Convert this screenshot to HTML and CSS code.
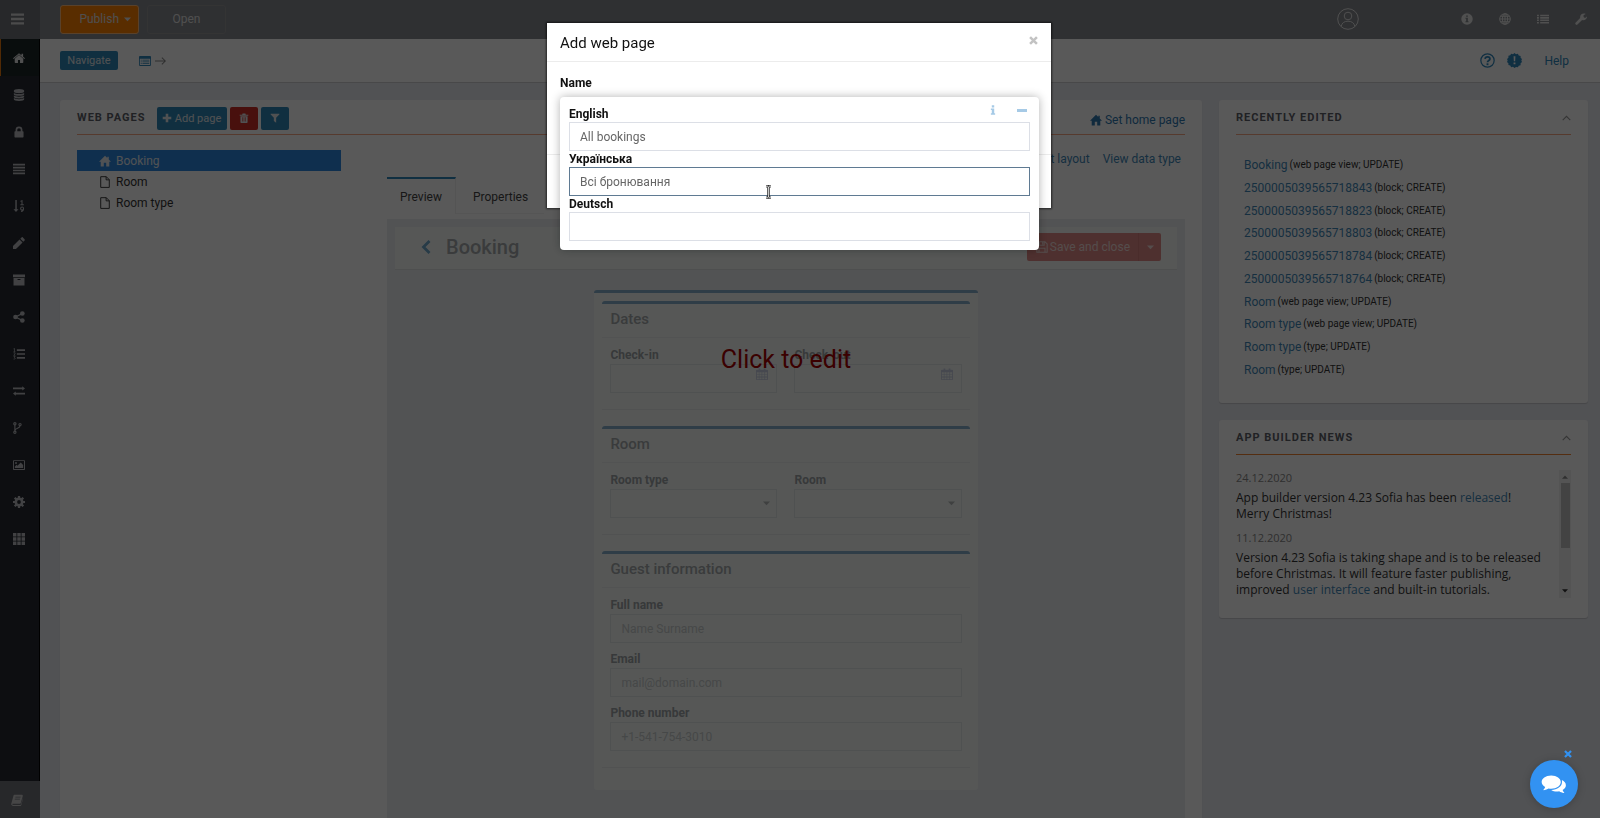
FILE: index.html
```html
<!DOCTYPE html>
<html lang="en">
<head>
  <meta charset="UTF-8" />
  <meta name="viewport" content="width=device-width, initial-scale=1" />
  <title>App builder - Web pages</title>
  <link rel="stylesheet" href="styles.css">
</head>
<body>
  <!-- icon sprite -->
  <svg class="sprite" aria-hidden="true">
    <symbol id="i-bars" viewBox="0 0 14 14"><path d="M0 1h14v2.6H0zM0 5.7h14v2.6H0zM0 10.4h14V13H0z"/></symbol>
    <symbol id="i-home" viewBox="0 0 14 14"><path d="M7 3.6 2 7.8V12c0 .5.3.8.8.8h3V9.4h2.4v3.4h3c.5 0 .8-.3.8-.8V7.8zM7 1.4 0 7.2l.8.9L7 3l6.200 5.100.8-.9-2.200-1.800V2h-1.900v1.800z"/></symbol>
    <symbol id="i-house" viewBox="0 0 14 14"><path d="M7 .8 0 7.800h2V13.500h3.600V9h2.800v4.500H12V7.800h2l-2.600-2.600V2H9.700v1.500z"/></symbol>
    <symbol id="i-db" viewBox="0 0 14 14"><path d="M7 0c3.600 0 6 .9 6 2v1c0 1.100-2.400 2-6 2S1 4.100 1 3V2c0-1.100 2.400-2 6-2zM1 4.600C2.200 5.500 4.500 5.900 7 5.900s4.800-.4 6-1.300V6c0 1.100-2.400 2-6 2S1 7.100 1 6zM1 7.600c1.200.9 3.500 1.300 6 1.300s4.800-.4 6-1.300V9c0 1.100-2.400 2-6 2S1 10.100 1 9zM1 10.600c1.200.9 3.500 1.300 6 1.300s4.800-.4 6-1.300V12c0 1.100-2.400 2-6 2s-6-.9-6-2z"/></symbol>
    <symbol id="i-lock" viewBox="0 0 14 14"><path fill-rule="evenodd" d="M3 6V4.500a4 4 0 0 1 8 0V6h.5c.5 0 .8.300.8.800v5.700c0 .5-.3.800-.8.800h-9c-.5 0-.8-.3-.8-.8V6.800c0-.5.3-.8.8-.8zm2 0h4V4.500a2 2 0 0 0-4 0z"/></symbol>
    <symbol id="i-align" viewBox="0 0 14 14"><path d="M0 1h14v1.900H0zM0 4.400h14v1.900H0zM0 7.800h14v1.900H0zM0 11.200h14v1.900H0z"/></symbol>
    <symbol id="i-sort" viewBox="0 0 14 14"><path d="M2.700 0h1.700v10.700h2L3.500 14 .6 10.700h2.100z"/><path fill="none" stroke="currentColor" stroke-width="1.200" d="M8.700 1.600 10.500.8V5.500M8.600 5.600h4M12.300 10a1.700 1.700 0 1 1-3.400-.1 1.700 1.700 0 0 1 3.400.1c0 1.800-.7 3.300-2.900 3.300"/></symbol>
    <symbol id="i-pencil" viewBox="0 0 14 14"><path d="M0 14v-3.500L7.600 2.900l3.500 3.500L3.500 14zM8.500 2 10 .5c.5-.5 1-.5 1.500 0l2 2c.5.500.5 1 0 1.500L12 5.500z"/></symbol>
    <symbol id="i-archive" viewBox="0 0 14 14"><path fill-rule="evenodd" d="M0 .5h14v3.300H0zM.6 4.600h12.800v8.900H.6zm4.700 1.300v1.200h3.400V5.900z"/></symbol>
    <symbol id="i-share" viewBox="0 0 14 14"><circle cx="2.900" cy="7" r="2.700"/><circle cx="10.900" cy="2.900" r="2.700"/><circle cx="10.900" cy="11.100" r="2.700"/><path fill="none" stroke="currentColor" stroke-width="1.600" d="m11 2.900-8 4.100 8 4.100"/></symbol>
    <symbol id="i-ol" viewBox="0 0 14 14"><path d="M4.500 1.500H14v2H4.500zM4.500 6H14v2H4.500zM4.500 10.500H14v2H4.500z"/><path fill="none" stroke="currentColor" stroke-width=".9" d="M.7.900 1.700.500V4M.7 4.200h2M.6 5.600h1.800v1.300L.8 8.500h1.900M.7 10h1.800L1.600 11.300c1.500.2 1.200 2-.9 1.700"/></symbol>
    <symbol id="i-exchange" viewBox="0 0 14 14"><path d="M0 3h10.800V1.500L14 4.200 10.800 6.500V5H0zM14 9H3.200V7.500L0 10l3.200 2.500V11H14z"/></symbol>
    <symbol id="i-fork" viewBox="0 0 14 14"><g fill="none" stroke="currentColor" stroke-width="1.300"><circle cx="2.200" cy="2" r="1.300"/><circle cx="8.200" cy="3" r="1.300"/><circle cx="2.200" cy="12" r="1.300"/><path d="M2.200 3.400v7.200M8.200 4.400C8.200 8 2.500 6.500 2.300 10"/></g></symbol>
    <symbol id="i-image" viewBox="0 0 16 14"><path fill-rule="evenodd" d="M1 .5h14a1 1 0 0 1 1 1v11a1 1 0 0 1-1 1H1a1 1 0 0 1-1-1v-11a1 1 0 0 1 1-1zm.3 1.300v10.400h13.400V1.800zM2.500 11V9l2.200-2.200L6 8l4.300-4.200L13.500 7v4z"/><circle cx="4" cy="4.200" r="1.300"/></symbol>
    <symbol id="i-cog" viewBox="0 0 14 14"><circle cx="7" cy="7" r="3.700" fill="none" stroke="currentColor" stroke-width="3"/><path fill="none" stroke="currentColor" stroke-width="2.600" d="M7 0v3M7 11v3M0 7h3M11 7h3M2 2l2.200 2.200M9.800 9.800 12 12M12 2 9.800 4.200M4.200 9.800 2 12"/></symbol>
    <symbol id="i-grid" viewBox="0 0 14 14"><path d="M0 0h4v4H0zM5 0h4v4H5zM10 0h4v4h-4zM0 5h4v4H0zM5 5h4v4H5zM10 5h4v4h-4zM0 10h4v4H0zM5 10h4v4H5zM10 10h4v4h-4z"/></symbol>
    <symbol id="i-book" viewBox="0 0 14 14"><path fill-rule="evenodd" d="M4.500 1h8c1 0 1.500.7 1.200 1.500l-2.300 8c-.2.700-.8 1-1.500 1H2.300c-.6 0-.8.4-.5.900.2.300.5.400 1 .4h7.800c.6 0 .9-.2 1.100-.9L13.900 5c.2 1-.1 1.500-.3 2l-1.500 5.600c-.3 1-.8 1.400-1.700 1.400H2.500C1 14 0 12.700.3 11.300L2.700 2.500C3 1.500 3.500 1 4.500 1zm.7 2.300-.2.900h6l.3-.9zM4.600 5.500l-.3.900h6l.3-.9z"/></symbol>
    <symbol id="i-plus" viewBox="0 0 14 14"><path d="M5.200 1h3.600v4.200H13v3.600H8.800V13H5.200V8.800H1V5.200h4.200z"/></symbol>
    <symbol id="i-trash" viewBox="0 0 14 14"><path fill-rule="evenodd" d="M1 2.300h3.500L5 .8h4l.5 1.500H13v1.500H1zM2 4.500h10v8.300c0 .7-.4 1.200-1.100 1.200H3.100C2.400 14 2 13.500 2 12.800zM4.300 6v6h.8V6zm2.300 0v6h.8V6zm2.300 0v6h.8V6z"/></symbol>
    <symbol id="i-filter" viewBox="0 0 14 14"><path d="M1 1h12c.3.700.2.900 0 1.100L8.600 6.600v7L5.400 11.200V6.600L1 2.100C.8 1.900.7 1.700 1 1z"/></symbol>
    <symbol id="i-file" viewBox="0 0 12 14"><path fill="none" stroke="currentColor" stroke-width="1.100" d="M1 .8h6.500L11 4.300v9H1zM7.300.8v3.700H11"/></symbol>
    <symbol id="i-window" viewBox="0 0 14 12"><path fill-rule="evenodd" d="M1 .3h12c.6 0 1 .4 1 1v9.500c0 .6-.4 1-1 1H1c-.6 0-1-.4-1-1V1.300c0-.6.4-1 1-1zM1 3.500v7.200h12V3.500zM2 4.500h1.200v1H2zM4 4.500h8v1H4zM2 6.500h1.200v1H2zM4 6.500h8v1H4zM2 8.500h1.200v1H2zM4 8.500h8v1H4z"/></symbol>
    <symbol id="i-arrow" viewBox="0 0 14 14"><path fill="none" stroke="currentColor" stroke-width="1.200" d="M0 7h12M8 3l4 4-4 4"/></symbol>
    <symbol id="i-user" viewBox="0 0 22 22"><g fill="none" stroke="currentColor" stroke-width="1"><circle cx="11" cy="11" r="10.300"/><circle cx="11" cy="8" r="3.800"/><path d="M4.200 18.500c.5-3.500 3-5.300 6.800-5.300s6.300 1.800 6.800 5.300"/></g></symbol>
    <symbol id="i-info" viewBox="0 0 14 14"><path fill-rule="evenodd" d="M7 .3a6.700 6.700 0 1 1 0 13.400A6.700 6.700 0 0 1 7 .3zM6 2.800v1.700h2V2.800zM5.200 5.500v1.200H6v2.800h-.8v1.200h3.600V9.500H8v-4z"/></symbol>
    <symbol id="i-i" viewBox="0 0 14 14"><path d="M5.300.5h3.400v3H5.300zM4 5h4.700v6.500H10v2H4v-2h1.300V7H4z"/></symbol>
    <symbol id="i-globe" viewBox="0 0 14 14"><g fill="none" stroke="currentColor" stroke-width="1.200"><circle cx="7" cy="7" r="6.200"/><ellipse cx="7" cy="7" rx="3" ry="6.200"/><path d="M7 .8v12.400M.8 7h12.400M1.800 3.900h10.400M1.800 10.100h10.400"/></g></symbol>
    <symbol id="i-list" viewBox="0 0 14 12"><path d="M0 1h2.200v1.800H0zM3.700 1H14v1.800H3.700zM0 3.800h2.200v1.800H0zM3.700 3.800H14v1.800H3.700zM0 6.600h2.200v1.800H0zM3.700 6.600H14v1.800H3.700zM0 9.400h2.200v1.800H0zM3.700 9.400H14v1.800H3.700z"/></symbol>
    <symbol id="i-wrench" viewBox="0 0 14 14"><path d="M.6 11.300 6 5.900C5.500 3 7.500.5 10.500.6c.7 0 1.500.2 2 .5L10 2.700v2l1.700 1 2.300-1.500c.2 2.700-2.500 5-5.700 4.100l-5.400 5.200c-.6.600-1.400.6-2 0s-.900-1.500-.3-2.200z"/></symbol>
    <symbol id="i-question" viewBox="0 0 16 16"><circle cx="8" cy="8" r="7.100" fill="none" stroke="currentColor" stroke-width="1.300"/><path fill="none" stroke="currentColor" stroke-width="1.900" d="M5.400 6.300c.2-3 5.200-2.900 5.200 0C10.600 8 8 7.900 8 9.800"/><path d="M7 11h2v2H7z"/></symbol>
    <symbol id="i-badge" viewBox="0 0 16 16"><path fill-rule="evenodd" d="m8 0 1.600 1.300 2-.5.9 1.800 2 .5v2L16 6.500 15.300 8l.7 1.700-1.500 1.300v2l-2 .5-.9 1.800-2-.5L8 16l-1.600-1.300-2 .5-.9-1.800-2-.5v-2L0 9.500.7 8 0 6.300 1.500 5V3l2-.5.9-1.800 2 .5zM7 3.500l.3 5.300h1.400L9 3.500zM7 10v2h2v-2z"/></symbol>
    <symbol id="i-left" viewBox="0 0 10 14"><path fill="none" stroke="currentColor" stroke-width="2.800" d="M8.500 1 2.500 7l6 6"/></symbol>
    <symbol id="i-save" viewBox="0 0 14 14"><g fill="none" stroke="currentColor" stroke-width="1.200"><path d="M1 1h9.500L13 3.500V13H1zM3.500 13V8.500h7V13M4 1v4h5.500V1M7.800 1.500V4"/></g></symbol>
    <symbol id="i-cal" viewBox="0 0 14 14"><path fill-rule="evenodd" d="M1 2h2V.5h2V2h4V.5h2V2h2c.6 0 1 .4 1 1v10c0 .6-.4 1-1 1H1c-.6 0-1-.4-1-1V3c0-.6.4-1 1-1zm0 3v2.200h2.300V5zm3 0v2.200h2.500V5zm3.300 0v2.200h2.500V5zm3.300 0v2.200H13V5zM1 8v2h2.300V8zm3 0v2h2.500V8zm3.300 0v2h2.500V8zm3.300 0v2H13V8zM1 11v2h2.300v-2zm3 0v2h2.500v-2zm3.300 0v2h2.500v-2zm3.300 0v2H13v-2z"/></symbol>
    <symbol id="i-up" viewBox="0 0 10 6"><path fill="none" stroke="currentColor" stroke-width="1.200" d="m.8 5.300 4.200-4.200 4.200 4.200"/></symbol>
    <symbol id="i-caret" viewBox="0 0 8 5"><path d="M0 .3h8L4 4.500z"/></symbol>
    <symbol id="i-times" viewBox="0 0 10 10"><path fill="none" stroke="currentColor" stroke-width="2.800" d="m1.200 1.200 7.600 7.600M8.800 1.200 1.200 8.800"/></symbol>
    <symbol id="i-chat" viewBox="0 0 28 22"><path d="M11 1.200c6 0 10.300 3.200 10.300 7.200s-4.300 7.200-10.300 7.200c-1 0-1.900-.1-2.800-.3-1.400 1-3.100 1.600-5.200 1.800-.4 0-.5-.4-.2-.7.900-.8 1.500-1.600 1.700-2.700C2.200 12.400.7 10.500.7 8.400c0-4 4.300-7.200 10.300-7.200zM22.500 6.200c2.600 1.300 4.300 3.200 4.300 5.600 0 2.100-1.400 3.800-3.500 5.100.2 1 .8 1.800 1.600 2.600.3.300.2.700-.2.700-2.100-.2-3.700-.8-5.100-1.800-3.400.600-6.400-.1-8.600-1.600 6.600 0 11.600-3.500 11.600-8.400 0-.7 0-1.500-.1-2.200z"/></symbol>
  </svg>

  <div class="app">
    <aside class="sidebar">
      <button class="side-toggle" aria-label="Menu"><svg class="icon"><use href="#i-bars"/></svg></button>
      <nav class="side-nav">
        <a href="#" class="active" aria-label="Home"><svg class="icon"><use href="#i-home"/></svg></a>
        <a href="#" aria-label="Data"><svg class="icon"><use href="#i-db"/></svg></a>
        <a href="#" aria-label="Access"><svg class="icon"><use href="#i-lock"/></svg></a>
        <a href="#" aria-label="Menus"><svg class="icon"><use href="#i-align"/></svg></a>
        <a href="#" aria-label="Sequences"><svg class="icon"><use href="#i-sort"/></svg></a>
        <a href="#" aria-label="Edit"><svg class="icon"><use href="#i-pencil"/></svg></a>
        <a href="#" aria-label="Archive"><svg class="icon"><use href="#i-archive"/></svg></a>
        <a href="#" aria-label="Share"><svg class="icon"><use href="#i-share"/></svg></a>
        <a href="#" aria-label="Lists"><svg class="icon"><use href="#i-ol"/></svg></a>
        <a href="#" aria-label="Exchange"><svg class="icon"><use href="#i-exchange"/></svg></a>
        <a href="#" aria-label="Processes"><svg class="icon"><use href="#i-fork"/></svg></a>
        <a href="#" aria-label="Images"><svg class="icon"><use href="#i-image"/></svg></a>
        <a href="#" aria-label="Settings"><svg class="icon"><use href="#i-cog"/></svg></a>
        <a href="#" aria-label="Apps"><svg class="icon"><use href="#i-grid"/></svg></a>
      </nav>
      <a href="#" class="side-docs" aria-label="Documentation"><svg class="icon"><use href="#i-book"/></svg></a>
    </aside>

    <div class="page">
      <header class="topbar">
        <button class="top-btn publish">Publish <svg class="caret"><use href="#i-caret"/></svg></button>
        <button class="top-btn">Open</button>
        <div class="top-icons">
          <a href="#" class="user" aria-label="User"><svg><use href="#i-user"/></svg></a>
          <a href="#" aria-label="Info"><svg class="icon"><use href="#i-info"/></svg></a>
          <a href="#" aria-label="Language"><svg class="icon"><use href="#i-globe"/></svg></a>
          <a href="#" aria-label="List"><svg class="icon"><use href="#i-list"/></svg></a>
          <a href="#" aria-label="Tools"><svg class="icon"><use href="#i-wrench"/></svg></a>
        </div>
      </header>

      <div class="subbar">
        <button class="btn navigate">Navigate</button>
        <span class="crumb"><svg class="icon"><use href="#i-window"/></svg><svg class="icon arrow"><use href="#i-arrow"/></svg></span>
        <div class="help">
          <a href="#" aria-label="Question"><svg><use href="#i-question"/></svg></a>
          <a href="#" aria-label="Notice"><svg><use href="#i-badge"/></svg></a>
          <a href="#" class="help-link">Help</a>
        </div>
      </div>

      <main class="content">
        <section class="panel pages">
          <div class="panel-head">
            <h2>Web pages</h2>
            <div class="tools">
              <button class="btn"><svg class="icon"><use href="#i-plus"/></svg>Add page</button>
              <button class="btn danger" aria-label="Delete"><svg class="icon"><use href="#i-trash"/></svg></button>
              <button class="btn" aria-label="Filter"><svg class="icon"><use href="#i-filter"/></svg></button>
            </div>
            <a href="#" class="set-home"><svg class="icon"><use href="#i-house"/></svg>Set home page</a>
          </div>

          <div class="columns">
            <ul class="tree">
              <li class="selected"><svg class="icon"><use href="#i-house"/></svg>Booking</li>
              <li><svg class="icon"><use href="#i-file"/></svg>Room</li>
              <li><svg class="icon"><use href="#i-file"/></svg>Room type</li>
            </ul>

            <div class="editor">
              <div class="view-links">
                <a href="#">Edit layout</a>
                <a href="#">View data type</a>
              </div>
              <div class="tabs">
                <button class="tab current">Preview</button>
                <button class="tab">Properties</button>
              </div>

              <div class="preview">
                <div class="preview-head">
                  <svg class="back"><use href="#i-left"/></svg>
                  <h1>Booking</h1>
                  <div class="save">
                    <button class="save-main"><svg class="icon"><use href="#i-save"/></svg>Save and close</button>
                    <button class="save-more" aria-label="More"><svg class="caret"><use href="#i-caret"/></svg></button>
                  </div>
                </div>

                <form class="card">
                  <fieldset>
                    <h3>Dates</h3>
                    <div class="fields two">
                      <div class="field date"><label for="checkin">Check-in</label><input id="checkin" type="text"><svg class="icon"><use href="#i-cal"/></svg></div>
                      <div class="field date"><label for="checkout">Check-out</label><input id="checkout" type="text"><svg class="icon"><use href="#i-cal"/></svg></div>
                    </div>
                  </fieldset>
                  <fieldset>
                    <h3>Room</h3>
                    <div class="fields two">
                      <div class="field pick"><label for="roomtype">Room type</label><select id="roomtype"><option></option></select><svg class="caret"><use href="#i-caret"/></svg></div>
                      <div class="field pick"><label for="room">Room</label><select id="room"><option></option></select><svg class="caret"><use href="#i-caret"/></svg></div>
                    </div>
                  </fieldset>
                  <fieldset>
                    <h3>Guest information</h3>
                    <div class="fields">
                      <div class="field"><label for="fullname">Full name</label><input id="fullname" type="text" placeholder="Name Surname"></div>
                      <div class="field"><label for="email">Email</label><input id="email" type="text" placeholder="mail@domain.com"></div>
                      <div class="field"><label for="phone">Phone number</label><input id="phone" type="text" placeholder="+1-541-754-3010"></div>
                    </div>
                  </fieldset>
                </form>
                <div class="click-edit">Click to edit</div>
              </div>
            </div>
          </div>
        </section>

        <div class="side-panels">
          <section class="panel">
            <div class="panel-head"><h2>Recently edited</h2><button class="fold" aria-label="Collapse"><svg><use href="#i-up"/></svg></button></div>
            <ul class="recent">
              <li><a href="#">Booking</a> <small>(web page view; UPDATE)</small></li>
              <li><a href="#">2500005039565718843</a> <small>(block; CREATE)</small></li>
              <li><a href="#">2500005039565718823</a> <small>(block; CREATE)</small></li>
              <li><a href="#">2500005039565718803</a> <small>(block; CREATE)</small></li>
              <li><a href="#">2500005039565718784</a> <small>(block; CREATE)</small></li>
              <li><a href="#">2500005039565718764</a> <small>(block; CREATE)</small></li>
              <li><a href="#">Room</a> <small>(web page view; UPDATE)</small></li>
              <li><a href="#">Room type</a> <small>(web page view; UPDATE)</small></li>
              <li><a href="#">Room type</a> <small>(type; UPDATE)</small></li>
              <li><a href="#">Room</a> <small>(type; UPDATE)</small></li>
            </ul>
          </section>

          <section class="panel">
            <div class="panel-head news-head"><h2>App builder news</h2><button class="fold" aria-label="Collapse"><svg><use href="#i-up"/></svg></button></div>
            <div class="news">
              <div class="news-text">
                <time>24.12.2020</time>
                <p>App builder version 4.23 Sofia has been <a href="#">released</a>! Merry Christmas!</p>
                <time>11.12.2020</time>
                <p>Version 4.23 Sofia is taking shape and is to be released before Christmas. It will feature faster publishing, improved <a href="#">user interface</a> and built-in tutorials.</p>
              </div>
              <div class="scrollbar"><svg class="up"><use href="#i-caret"/></svg><span class="thumb"></span><svg><use href="#i-caret"/></svg></div>
            </div>
          </section>
        </div>
      </main>
    </div>
  </div>

  <div class="overlay">
    <div class="dialog" role="dialog" aria-labelledby="dialogTitle">
      <div class="dialog-head">
        <h2 id="dialogTitle">Add web page</h2>
        <button class="close" aria-label="Close"><svg><use href="#i-times"/></svg></button>
      </div>
      <div class="dialog-body">
        <div class="name-label">Name</div>
        <!-- translations popup, opens over the name field -->
        <div class="langs">
          <div class="lang-tools">
            <button aria-label="Info"><svg><use href="#i-i"/></svg></button>
            <button aria-label="Collapse"><span class="minus"></span></button>
          </div>
          <label for="nameEn">English</label>
          <input id="nameEn" type="text" value="All bookings">
          <label for="nameUk">Українська</label>
          <input id="nameUk" class="focused" type="text" value="Всі бронювання">
          <label for="nameDe">Deutsch</label>
          <input id="nameDe" type="text">
          <svg class="pointer" viewBox="0 0 7 15"><path d="M1 1.500h1.700l.8.700.8-.7H6M3.500 2v11M1 13.500h1.700l.8-.7.8.7H6" fill="none" stroke="#222" stroke-width="2.600"/><path d="M1 1.500h1.700l.8.700.8-.7H6M3.500 2v11M1 13.500h1.700l.8-.7.8.7H6" fill="none" stroke="#fff" stroke-width=".8"/></svg>
        </div>
      </div>
      <div class="dialog-foot"></div>
    </div>
  </div>

  <div class="chat">
    <button class="chat-close" aria-label="Hide chat"><svg><use href="#i-times"/></svg></button>
    <button class="chat-open" aria-label="Chat"><svg><use href="#i-chat"/></svg></button>
  </div>
</body>
</html>
```

FILE: styles.css
```css
* {
  box-sizing: border-box;
}
body {
  margin: 0;
  font-family: Roboto, "Liberation Sans", sans-serif;
  font-size: 12px;
  line-height: 16px;
  color: #333;
  background: #e9ebf0;
  overflow: hidden;
}
h1, h2, h3, ul, p, fieldset {
  margin: 0;
  padding: 0;
  border: 0;
}
ul {
  list-style: none;
}
a {
  color: #3f88b8;
  text-decoration: none;
}
button, input, select {
  font-family: inherit;
  font-size: 12px;
  margin: 0;
}
button {
  padding: 0;
  border: 0;
  background: none;
  color: inherit;
}
svg {
  fill: currentColor;
  display: block;
  flex: none;
}
.sprite {
  position: absolute;
  width: 0;
  height: 0;
}
.icon {
  width: 12px;
  height: 12px;
}
.caret {
  width: 7px;
  height: 5px;
}

/* frame */
.app {
  display: flex;
  height: 100vh;
}
.sidebar {
  width: 40px;
  flex: none;
  display: flex;
  flex-direction: column;
  background: #272a32;
  border-right: 1px solid #000;
}
.side-toggle, .side-docs {
  height: 39px;
  margin-right: -1px;
  padding-left: 11px;
  background: #70737a;
  color: #d8d8d8;
  display: flex;
  align-items: center;
}
.side-toggle {
  padding-bottom: 2px;
}
.side-toggle .icon {
  width: 13px;
  height: 14px;
}
.side-nav {
  flex: 1;
}
.side-nav a {
  height: 37px;
  padding-left: 13px;
  display: flex;
  align-items: center;
  color: #b9bbc0;
}
.side-nav a.active {
  padding-left: 12px;
  background: #1a2526;
  border-left: 1px solid #e87811;
  color: #e4e4e4;
}
.side-docs {
  height: 37px;
  color: #c8c8c8;
}
.page {
  flex: 1;
  min-width: 0;
  display: flex;
  flex-direction: column;
}

.topbar {
  height: 39px;
  flex: none;
  display: flex;
  align-items: center;
  gap: 8px;
  padding: 0 13px 1px 20px;
  background: #86898f;
}
.top-btn {
  width: 79px;
  height: 29px;
  border: 1px solid #969696;
  border-radius: 3px;
  color: #e2e2e2;
}
.publish {
  display: flex;
  align-items: center;
  justify-content: flex-end;
  gap: 5px;
  padding-right: 7px;
  background: #ff8000;
  border-color: #ffba78;
}
.top-icons {
  margin-left: auto;
  display: flex;
  align-items: center;
  gap: 26px;
  color: #e4e4e4;
}
.top-icons a {
  color: inherit;
}
.user {
  margin-right: 76px;
}
.user svg {
  width: 22px;
  height: 22px;
}

.subbar {
  height: 44px;
  flex: none;
  display: flex;
  align-items: center;
  padding: 0 31px 0 20px;
  background: #fff;
  border-bottom: 1px solid #cdcfd2;
}
.btn {
  display: flex;
  align-items: center;
  justify-content: center;
  gap: 3px;
  min-width: 28px;
  height: 23px;
  border-radius: 2px;
  background: #3088b8;
  color: #e4e9ec;
  font-size: 11px;
}
.btn .icon {
  width: 10px;
  height: 12px;
}
.btn.danger {
  background: #cf2f26;
}
.navigate {
  width: 58px;
  height: 19px;
}
.crumb {
  display: flex;
  align-items: center;
  gap: 4px;
  margin-left: 21px;
  color: #2f86bb;
}
.arrow {
  color: #888;
}
.help {
  margin-left: auto;
  display: flex;
  align-items: center;
  gap: 12px;
}
.help a {
  color: #2f86bb;
}
.help svg {
  width: 15px;
  height: 15px;
}
.help .help-link {
  margin-left: 10px;
}

/* panels */
.content {
  flex: 1;
  min-height: 0;
  display: grid;
  grid-template-columns: 1142fr 369fr;
  gap: 17px;
  padding: 17px 12px 0 20px;
}
.panel {
  padding: 0 17px;
  background: #fff;
  border-radius: 3px;
  box-shadow: 0 1px 1px rgba(0, 0, 0, 0.15);
}
.panel-head {
  display: flex;
  align-items: center;
  height: 35px;
  padding-top: 2px;
  border-bottom: 1px solid #f5a585;
}
.news-head {
  border-bottom-color: #f08030;
}
.panel-head h2 {
  font-size: 11px;
  font-weight: 700;
  letter-spacing: 1px;
  text-transform: uppercase;
  color: #5c6068;
}
.tools {
  display: flex;
  gap: 3px;
  margin-left: 11px;
}
.tools .btn:first-child {
  width: 70px;
}
.set-home {
  margin-left: auto;
  display: flex;
  align-items: center;
  gap: 3px;
  padding-top: 4px;
  color: #2f78b0;
}
.fold {
  margin-left: auto;
  color: #999;
}
.fold svg {
  width: 9px;
  height: 6px;
}
.columns {
  display: flex;
  gap: 46px;
}
.tree {
  flex: 264;
  padding-top: 15px;
}
.tree li {
  display: flex;
  align-items: center;
  gap: 5px;
  height: 21px;
  padding-left: 22px;
}
.tree .selected {
  background: #2b88e0;
  color: #e6ebf0;
}
.editor {
  flex: 798;
}
.view-links {
  display: flex;
  justify-content: flex-end;
  gap: 13px;
  padding: 16px 4px 10px;
}
.tabs {
  display: flex;
  padding-bottom: 5px;
}
.tab {
  height: 37px;
  padding: 3px 16px 0 17px;
  border-bottom: 1px solid #f3f3f3;
  color: #444;
}
.tab.current {
  padding: 1px 13px 0;
  border-top: 2px solid #2f86bb;
  border-right: 1px solid #f0f0f0;
  border-bottom: 0;
}

/* page preview */
.preview {
  position: relative;
  height: 620px;
  padding: 8px;
  background: #ecedf0;
}
.preview-head {
  display: flex;
  align-items: center;
  height: 43px;
  padding: 0 16px 2px 26px;
  background: #f5faf7;
  border-bottom: 1px solid #dfe2e2;
}
.back {
  width: 10px;
  height: 14px;
  color: #6fa8cc;
}
h1 {
  margin-left: 15px;
  padding-bottom: 1px;
  font-size: 20px;
  font-weight: 500;
  line-height: 28px;
  color: #a5aaac;
}
.save {
  display: flex;
  height: 28px;
  margin-left: auto;
  border-radius: 2px;
  overflow: hidden;
  background: #e08a86;
  color: #f0dcda;
}
.save-main {
  display: flex;
  align-items: center;
  gap: 2px;
  padding: 0 8px 0 9px;
}
.save-more {
  width: 23px;
  border-left: 1px solid #d37f7b;
  display: flex;
  align-items: center;
  justify-content: center;
}
.card {
  width: 49%;
  height: 500px;
  margin: 20px auto 0;
  padding: 8px;
  background: #f5faf7;
  border-top: 3px solid #86aecb;
  border-radius: 3px;
}
fieldset {
  border-top: 3px solid #86aecb;
  border-bottom: 1px solid #e8ebea;
  border-radius: 3px 3px 0 0;
  margin-bottom: 16px;
}
h3 {
  padding: 5px 8px 8px;
  font-size: 15px;
  font-weight: 500;
  line-height: 20px;
  color: #a5aaac;
  border-bottom: 1px solid #ebeeed;
}
.fields {
  display: grid;
  gap: 9px 17px;
  padding: 10px 8px 16px;
}
.two {
  grid-template-columns: 1fr 1fr;
}
.field {
  position: relative;
}
.field label {
  display: block;
  font-weight: 700;
  line-height: 14px;
  margin-bottom: 2px;
  color: #9ea3a6;
}
.field input, .field select {
  display: block;
  width: 100%;
  height: 29px;
  padding: 0 10px;
  border: 1px solid #e3e7e7;
  border-radius: 0;
  background: transparent;
  appearance: none;
}
.field input::placeholder {
  color: #c9cdcd;
  opacity: 1;
}
.field .icon, .field .caret {
  position: absolute;
  right: 9px;
  top: 20px;
  color: #c9cee2;
}
.field .caret {
  right: 7px;
  top: 28px;
  color: #b4b8b8;
}
.click-edit {
  position: absolute;
  top: 126px;
  left: 0;
  right: 0;
  font-size: 25px;
  line-height: 30px;
  text-align: center;
  color: #a80000;
}

/* right column */
.side-panels {
  display: flex;
  flex-direction: column;
  gap: 17px;
}
.recent {
  display: flex;
  flex-direction: column;
  min-height: 268px;
  padding: 19px 8px 22px;
}
.recent li {
  flex: 1;
  display: flex;
  align-items: center;
  gap: 2px;
}
.recent small {
  font-size: 10px;
}
.news {
  display: flex;
  justify-content: space-between;
  gap: 12px;
  padding: 15px 0 20px;
}
.news-text {
  font-family: "Open Sans", "Noto Sans", sans-serif;
}
.news-text time {
  display: block;
  font-size: 11px;
  margin-bottom: 4px;
  color: #888;
}
.news-text p {
  margin-bottom: 8px;
}
.news-text p:last-child {
  margin-bottom: 0;
}
.scrollbar {
  flex: none;
  width: 12px;
  display: flex;
  flex-direction: column;
  align-items: center;
  padding: 5px 0;
  background: #f1f1f1;
}
.scrollbar svg {
  width: 6px;
  height: 4px;
}
.scrollbar .up {
  transform: rotate(180deg);
  color: #888;
}
.thumb {
  width: 9px;
  height: 65px;
  margin: 4px 0 auto;
  background: #c1c1c1;
}

/* add page dialog */
.overlay {
  position: fixed;
  inset: 0;
  display: flex;
  justify-content: center;
  align-items: flex-start;
  padding: 23px 2px 0 0;
  background: rgba(0, 0, 0, 0.65);
}
.dialog {
  width: 504px;
  background: #fff;
  box-shadow: 0 0 2px 1px rgba(0, 0, 0, 0.6);
  color: #111;
}
.dialog-head {
  display: flex;
  align-items: center;
  justify-content: space-between;
  height: 39px;
  padding: 1px 13px 0;
  border-bottom: 1px solid #ececec;
}
.dialog-head h2 {
  font-size: 15px;
  font-weight: 400;
}
.close {
  padding-bottom: 4px;
  color: #c3c3c3;
}
.close svg {
  width: 9px;
  height: 9px;
}
.dialog-body {
  position: relative;
  height: 92px;
  padding: 13px;
}
.name-label, .langs label {
  display: block;
  font-weight: 700;
  line-height: 16px;
}
.dialog-foot {
  height: 54px;
  border-top: 1px solid #ececec;
}
.langs {
  position: absolute;
  top: 35px;
  left: 13px;
  right: 12px;
  padding: 9px;
  background: #fff;
  border-radius: 4px;
  box-shadow: 0 0 10px rgba(0, 0, 0, 0.3);
}
.langs input {
  display: block;
  width: 100%;
  height: 29px;
  padding: 0 10px;
  border: 1px solid #dcdfe6;
  background: #fff;
  color: #666;
  outline: 0;
}
.langs .focused {
  border-color: #5f7a92;
}
.lang-tools {
  position: absolute;
  top: 8px;
  right: 12px;
  display: flex;
  align-items: center;
  gap: 19px;
  color: #a6cae6;
}
.lang-tools svg {
  width: 10px;
  height: 10px;
}
.minus {
  display: block;
  width: 10px;
  height: 3px;
  background: #a6cae6;
}
.pointer {
  position: absolute;
  top: 88px;
  left: 205px;
  width: 7px;
  height: 14px;
}

.chat {
  position: fixed;
  right: 22px;
  bottom: 10px;
  display: flex;
  flex-direction: column;
  align-items: flex-end;
  gap: 2px;
  color: #3292f2;
}
.chat-close {
  margin-right: 6px;
}
.chat-close svg {
  width: 8px;
  height: 8px;
}
.chat-open {
  width: 48px;
  height: 48px;
  display: flex;
  align-items: center;
  justify-content: center;
  border-radius: 50%;
  background: #3292f2;
  color: #fff;
  box-shadow: 0 1px 8px rgba(0, 0, 0, 0.2);
}
.chat-open svg {
  width: 26px;
  height: 21px;
}
```
